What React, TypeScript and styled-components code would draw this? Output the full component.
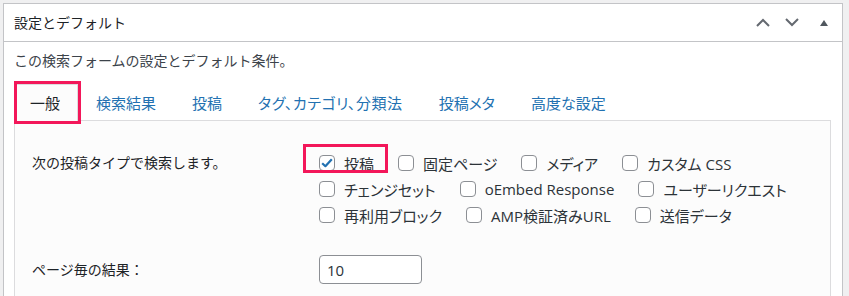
import React from "react";
import styled, { createGlobalStyle } from "styled-components";

const GlobalStyle = createGlobalStyle`
  html, body {
    margin: 0;
    padding: 0;
    background: #f0f0f1;
  }
  body {
    font-family: "Open Sans", "Noto Sans CJK JP", sans-serif;
    color: #1d2327;
  }
`;

const Page = styled.div`
  padding: 3px 6px 0 3px;
  height: 293px;
  overflow: hidden;
`;

const Card = styled.div`
  border: 1px solid #c3c4c7;
  background: #fff;
  height: 320px;
`;

const CardHeader = styled.div`
  display: flex;
  align-items: center;
  height: 37px;
  border-bottom: 1px solid #c3c4c7;
  padding-left: 10px;
`;

const Title = styled.h2`
  flex: 1;
  margin: 0;
  font-size: 14px;
  font-weight: 400;
  line-height: 20px;
  color: #1d2327;
`;

const HandleButton = styled.button<{ $w: number }>`
  width: ${(p) => p.$w}px;
  height: 36px;
  padding: 0;
  border: none;
  background: transparent;
  display: flex;
  align-items: center;
  justify-content: center;
  color: #646970;
  cursor: pointer;
`;

const CardBody = styled.div`
  padding: 9px 11px 0 10px;
`;

const Description = styled.p`
  margin: 0 0 13px;
  font-size: 14px;
  line-height: 20px;
  color: #3c434a;
`;

const TabBar = styled.div`
  display: flex;
  height: 36px;
  position: relative;
  z-index: 1;
`;

const Tab = styled.a<{ $active?: boolean; $marked?: boolean; $spacing?: number }>`
  position: relative;
  display: flex;
  align-items: center;
  padding: 0 17px 0 ${(p) => (p.$active ? 15 : 17)}px;
  font-size: 15px;
  font-feature-settings: "palt";
  letter-spacing: ${(p) => p.$spacing ?? 0}px;
  line-height: 20px;
  text-decoration: none;
  cursor: pointer;
  color: ${(p) => (p.$active ? "#1d2327" : "#2271b1")};
  background: ${(p) => (p.$active ? "#fcfcfc" : "transparent")};
  border: 1px solid ${(p) => (p.$active ? "#dcdcde" : "transparent")};
  border-bottom: none;
  height: 37px;
  box-sizing: border-box;

  ${(p) =>
    p.$marked &&
    `
    &::after {
      content: "";
      position: absolute;
      top: -4px;
      left: -1px;
      right: -4px;
      bottom: -3px;
      border: 3px solid #f3175a;
      pointer-events: none;
    }
  `}
`;

const TabPanel = styled.div`
  border: 1px solid #dcdcde;
  background: #fcfcfc;
  padding: 29px 16px 0 17px;
  height: 200px;
`;

const FieldRow = styled.div<{ $gap: number }>`
  display: grid;
  grid-template-columns: 287px 1fr;
  margin-bottom: ${(p) => p.$gap}px;
`;

const FieldLabel = styled.div<{ $top: number }>`
  font-size: 14px;
  line-height: 20px;
  color: #1d2327;
  padding-top: ${(p) => p.$top}px;
`;

const OptionList = styled.div`
  display: flex;
  flex-wrap: wrap;
  width: 500px;
`;

const Option = styled.label<{ $marked?: boolean }>`
  position: relative;
  display: inline-flex;
  align-items: center;
  gap: 9px;
  height: 26px;
  margin-right: 24px;
  font-size: 15px;
  font-feature-settings: "palt";
  color: #2c3338;
  white-space: nowrap;
  cursor: pointer;

  ${(p) =>
    p.$marked &&
    `
    &::after {
      content: "";
      position: absolute;
      top: -6px;
      left: -16px;
      right: -14px;
      bottom: 3px;
      border: 3px solid #f3175a;
      pointer-events: none;
    }
  `}
`;

const Box = styled.span`
  width: 16px;
  height: 16px;
  box-sizing: border-box;
  border: 1px solid #8c8f94;
  border-radius: 4px;
  background: #fff;
  display: flex;
  align-items: center;
  justify-content: center;
`;

const NumberInput = styled.input`
  width: 103px;
  height: 29px;
  box-sizing: border-box;
  border: 1px solid #8c8f94;
  border-radius: 4px;
  padding: 0 7px;
  font-family: "Open Sans", sans-serif;
  font-size: 15px;
  color: #2c3338;
  background: #fff;
`;

const ChevronUp = () => (
  <svg width="14" height="9" viewBox="0 0 14 9">
    <path d="M1 8 L7 2 L13 8" fill="none" stroke="#646970" strokeWidth="2" />
  </svg>
);

const ChevronDown = () => (
  <svg width="14" height="9" viewBox="0 0 14 9">
    <path d="M1 1 L7 7 L13 1" fill="none" stroke="#646970" strokeWidth="2" />
  </svg>
);

const Caret = () => (
  <svg width="8" height="6" viewBox="0 0 8 6">
    <path d="M0 6 L4 0 L8 6 Z" fill="#50575e" />
  </svg>
);

const Check = () => (
  <svg width="12" height="10" viewBox="0 0 12 10">
    <path
      d="M1.2 5.2 L4.4 8.2 L10.8 1.2"
      fill="none"
      stroke="#2271b1"
      strokeWidth="2.2"
      strokeLinejoin="round"
    />
  </svg>
);

const tabs = [
  { label: "一般" },
  { label: "検索結果" },
  { label: "投稿" },
  { label: "タグ、カテゴリ、分類法", spacing: 0.55 },
  { label: "投稿メタ" },
  { label: "高度な設定" },
];

const postTypes = [
  { label: "投稿", checked: true },
  { label: "固定ページ" },
  { label: "メディア" },
  { label: "カスタム CSS" },
  { label: "チェンジセット" },
  { label: "oEmbed Response" },
  { label: "ユーザーリクエスト" },
  { label: "再利用ブロック" },
  { label: "AMP検証済みURL" },
  { label: "送信データ" },
];

const App: React.FC = () => {
  return (
    <>
      <GlobalStyle />
      <Page>
        <Card>
          <CardHeader>
            <Title>設定とデフォルト</Title>
            <HandleButton $w={29}>
              <ChevronUp />
            </HandleButton>
            <HandleButton $w={29}>
              <ChevronDown />
            </HandleButton>
            <HandleButton $w={36}>
              <Caret />
            </HandleButton>
          </CardHeader>
          <CardBody>
            <Description>この検索フォームの設定とデフォルト条件。</Description>
            <TabBar>
              {tabs.map((t, i) => (
                <Tab key={t.label} $active={i === 0} $marked={i === 0} $spacing={t.spacing}>
                  {t.label}
                </Tab>
              ))}
            </TabBar>
            <TabPanel>
              <FieldRow $gap={27}>
                <FieldLabel $top={3}>次の投稿タイプで検索します。</FieldLabel>
                <OptionList>
                  {postTypes.map((o, i) => (
                    <Option key={o.label} $marked={i === 0}>
                      <Box>{o.checked && <Check />}</Box>
                      {o.label}
                    </Option>
                  ))}
                </OptionList>
              </FieldRow>
              <FieldRow $gap={0}>
                <FieldLabel $top={5}>ページ毎の結果：</FieldLabel>
                <div>
                  <NumberInput defaultValue="10" />
                </div>
              </FieldRow>
            </TabPanel>
          </CardBody>
        </Card>
      </Page>
    </>
  );
};

export default App;
